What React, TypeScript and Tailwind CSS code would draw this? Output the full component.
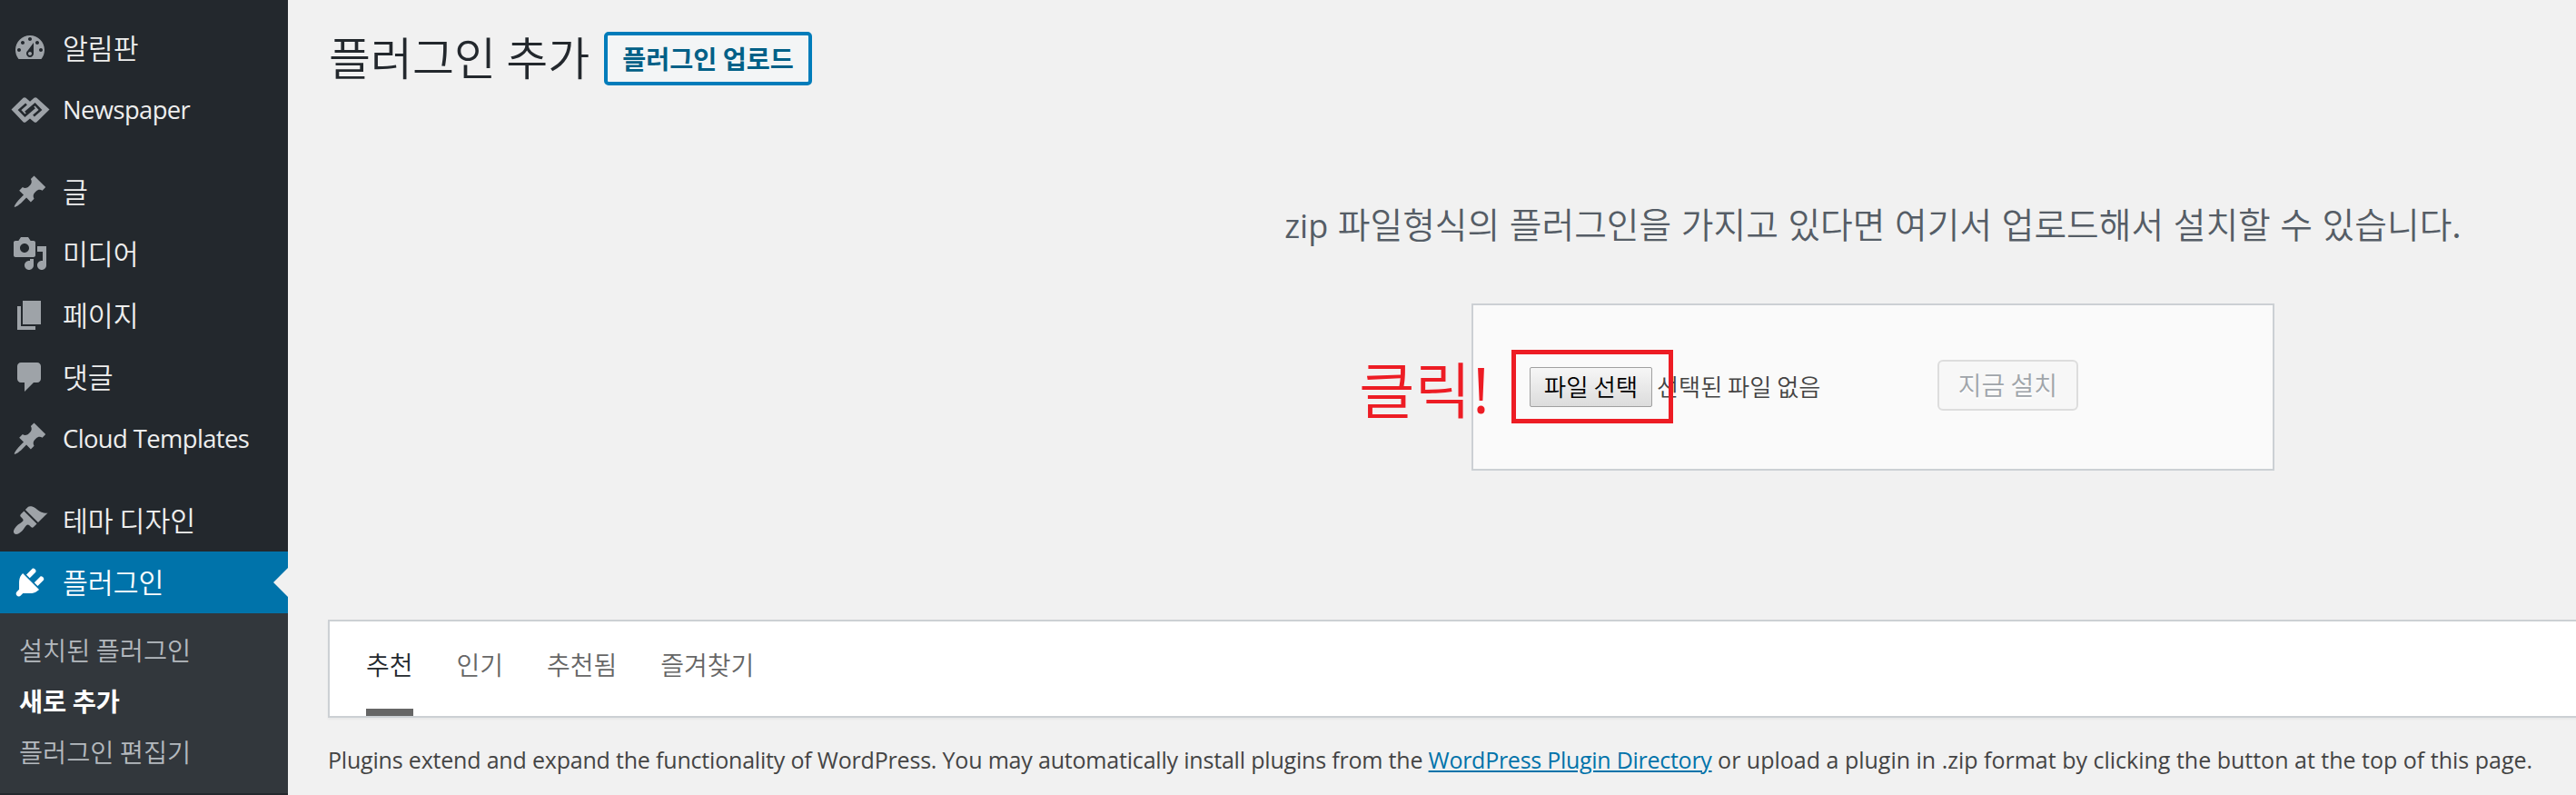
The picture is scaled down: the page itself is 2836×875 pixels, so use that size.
import type { ReactNode } from "react";

const KR = "font-['Noto_Sans_CJK_KR',sans-serif]";
const LATIN = "font-['Open_Sans',sans-serif]";

function Icon({ children }: { children: ReactNode }) {
  return (
    <svg viewBox="0 0 20 20" className="size-10 shrink-0 fill-current" fillRule="evenodd" aria-hidden="true">
      {children}
    </svg>
  );
}

const DashboardIcon = () => (
  <Icon>
    <path d="M3.76 16h12.48c1.1-1.37 1.76-3.11 1.76-5 0-4.42-3.58-8-8-8s-8 3.58-8 8c0 1.89.66 3.63 1.76 5zM10 4c.55 0 1 .45 1 1s-.45 1-1 1-1-.45-1-1 .45-1 1-1zM6 6c.55 0 1 .45 1 1s-.45 1-1 1-1-.45-1-1 .45-1 1-1zM14 6c.55 0 1 .45 1 1s-.45 1-1 1-1-.45-1-1 .45-1 1-1zM8.63 11.55L12 7v6c0 1.1-.9 2-2 2s-2-.9-2-2c0-.57.24-1.08.63-1.45zM4 10c.55 0 1 .45 1 1s-.45 1-1 1-1-.45-1-1 .45-1 1-1zM16 10c.55 0 1 .45 1 1s-.45 1-1 1-1-.45-1-1 .45-1 1-1zM10 12c.55 0 1 .45 1 1s-.45 1-1 1-1-.45-1-1 .45-1 1-1z" />
  </Icon>
);

const PinIcon = () => (
  <Icon>
    <path d="M10.44 3.02l1.82-1.82 6.36 6.35-1.83 1.82c-1.05-.68-2.48-.57-3.41.36l-.75.75c-.92.93-1.04 2.35-.35 3.41l-1.83 1.82-2.41-2.41-2.8 2.79c-.42.42-3.38 2.71-3.8 2.29s1.86-3.39 2.28-3.81l2.79-2.79L4.1 9.36l1.83-1.82c1.05.69 2.48.57 3.4-.36l.75-.75c.93-.92 1.05-2.35.36-3.41z" />
  </Icon>
);

const MediaIcon = () => (
  <Icon>
    <path d="M13 11V4c0-.55-.45-1-1-1h-1.67L9 1H5L3.67 3H2c-.55 0-1 .45-1 1v7c0 .55.45 1 1 1h10c.55 0 1-.45 1-1zM7 4.5c1.38 0 2.5 1.12 2.5 2.5S8.38 9.5 7 9.5 4.5 8.38 4.5 7 5.62 4.5 7 4.5zM14 6h5v10.5c0 1.38-1.12 2.5-2.5 2.5S14 17.88 14 16.5s1.12-2.5 2.5-2.5c.17 0 .34.02.5.05V9h-3V6zm-4 8.05V13h2v3.5c0 1.38-1.12 2.5-2.5 2.5S7 17.88 7 16.5 8.12 14 9.5 14c.17 0 .34.02.5.05z" />
  </Icon>
);

const PageIcon = () => (
  <Icon>
    <path d="M6 15V2h10v13H6zm-1 1h8v2H3V5h2v11z" />
  </Icon>
);

const CommentIcon = () => (
  <Icon>
    <path d="M5 2h9c1.1 0 2 .9 2 2v7c0 1.1-.9 2-2 2h-2l-5 5v-5H5c-1.1 0-2-.9-2-2V4c0-1.1.9-2 2-2z" />
  </Icon>
);

const BrushIcon = () => (
  <Icon>
    <path d="M14.48 11.06L7.41 3.99l1.5-1.5c.5-.56 2.3-.47 3.51.32 1.21.8 1.43 1.28 2.91 2.1 1.18.64 2.45 1.26 4.45.85zm-.71.71L6.7 4.7 4.93 6.47c-.39.39-.39 1.02 0 1.41l1.06 1.06c.39.39.39 1.03 0 1.42-.6.6-1.43 1.11-2.21 1.69-.35.26-.7.53-1.01.84C1.43 14.23.4 16.08 1.4 17.07c.99 1 2.84-.03 4.18-1.36.31-.31.58-.66.85-1.02.57-.78 1.08-1.61 1.69-2.21.39-.39 1.02-.39 1.41 0l1.06 1.06c.39.39 1.02.39 1.41 0z" />
  </Icon>
);

const PlugIcon = () => (
  <Icon>
    <path d="M13.11 4.36L9.87 7.6 8 5.73l3.24-3.24c.35-.34 1.05-.2 1.56.32.52.51.66 1.21.31 1.55zm-8 1.77l.91-1.12 9.01 9.01-1.19.84c-.71.71-2.63 1.16-3.82 1.16H6.14L4.9 17.26c-.59.59-1.54.59-2.12 0-.59-.58-.59-1.53 0-2.12l1.24-1.24v-3.88c0-1.13.4-3.19 1.09-3.89zm7.26 3.97l3.24-3.24c.34-.35 1.04-.21 1.55.31.52.51.66 1.21.31 1.55l-3.24 3.25z" />
  </Icon>
);

const NewspaperIcon = () => (
  <svg viewBox="-23 -20 46 40" className="-mx-[3px] h-10 w-[46px] shrink-0" aria-hidden="true">
    <path
      d="M-20.5-.5L-7.5-13.2Q-6-14.5-4.5-13.2L0-9.2 4.5-13.2Q6-14.5 7.5-13.2L21.5-.5 7.5 13.2Q6 14.5 4.5 13.2L0 9.4-4.5 13.2Q-6 14.5-7.5 13.2Z"
      className="fill-current"
    />
    <path
      d="M-4-6.5L-11.5 0-5.5 6.3 5-2.8M4 6.5L11.5 0 5.5-6.3-5 2.8"
      className="fill-none stroke-[#23282d]"
      strokeWidth="2.6"
    />
  </svg>
);

function MenuItem({ icon, label, latin, current }: { icon: ReactNode; label: string; latin?: boolean; current?: boolean }) {
  return (
    <li className={current ? "flex h-[68px] items-center bg-[#0073aa] pl-[13px] text-white" : "flex h-[68px] items-center pl-[13px] text-[#9ea3a8]"}>
      {icon}
      <span
        className={`${current ? "text-white" : "text-[#eee]"} ${
          latin
            ? "ml-4 font-['Open_Sans',sans-serif] text-[27.4px] font-normal tracking-[-0.6px]"
            : "ml-4 pb-[3px] font-['Noto_Sans_CJK_KR',sans-serif] text-[30.3px] font-[350]"
        } grow leading-10 whitespace-nowrap`}
      >
        {label}
      </span>
      {current && <span className="h-0 w-0 border-y-[16px] border-r-[16px] border-y-transparent border-r-[#f1f1f1]" />}
    </li>
  );
}

function Sidebar() {
  return (
    <nav className="h-[875px] w-[317px] shrink-0 bg-[#23282d] pt-[19px]">
      <ul>
        <MenuItem icon={<DashboardIcon />} label="알림판" />
        <MenuItem icon={<NewspaperIcon />} label="Newspaper" latin />
      </ul>
      <ul className="mt-[22px]">
        <MenuItem icon={<PinIcon />} label="글" />
        <MenuItem icon={<MediaIcon />} label="미디어" />
        <MenuItem icon={<PageIcon />} label="페이지" />
        <MenuItem icon={<CommentIcon />} label="댓글" />
        <MenuItem icon={<PinIcon />} label="Cloud Templates" latin />
      </ul>
      <ul className="mt-[22px]">
        <MenuItem icon={<BrushIcon />} label="테마 디자인" />
        <MenuItem icon={<PlugIcon />} label="플러그인" current />
      </ul>
      <ul className={`${KR} h-[198px] bg-[#32373c] pt-3 pl-[21px] text-[28.4px] leading-[56px] font-[350] text-[#b4b9be]`}>
        <li>설치된 플러그인</li>
        <li className="font-semibold text-white">새로 추가</li>
        <li>플러그인 편집기</li>
      </ul>
    </nav>
  );
}

function UploadForm() {
  return (
    <div className="relative mx-auto mt-[61px] flex h-[184px] w-[884px] items-start border-2 border-[#ccd0d4] bg-[#fafafa] pt-[60px] pl-[62px]">
      <button className={`${KR} mt-2 h-11 w-[135px] rounded-[2px] border border-[#a0a0a0] bg-linear-to-b from-[#f6f6f6] to-[#dcdcdc] pb-0.5 text-[26.5px] leading-10 font-[350] whitespace-nowrap text-black`}>
        파일 선택
      </button>
      <span className={`${KR} mt-2 ml-[5px] w-[309px] text-[26.2px] leading-[42px] font-[350] whitespace-nowrap text-[#444]`}>선택된 파일 없음</span>
      <button className={`${KR} h-14 w-[155px] rounded-md border-2 border-[#ddd] bg-[#f7f7f7] pb-0.5 text-[28px] leading-10 font-[350] whitespace-nowrap text-[#a0a5aa] [text-shadow:0_2px_0_#fff]`}>
        지금 설치
      </button>
      <div className="absolute top-[49px] left-[42px] h-[81px] w-[178px] border-[5px] border-[#ed1c24]" />
      <div className={`${KR} absolute top-[50px] -left-[126px] h-20 text-[67px] leading-[80px] font-[350] whitespace-nowrap text-[#ed1c24]`}>
        클릭<span className={`${LATIN} ml-0.5 text-[70px] leading-none font-normal`}>!</span>
      </div>
    </div>
  );
}

const TABS = ["추천", "인기", "추천됨", "즐겨찾기"];

function FilterBar() {
  return (
    <div className={`${KR} mt-[164px] flex h-[108px] gap-12 border-2 border-[#ccd0d4] bg-white pl-10 text-[28px] leading-10 font-[350] shadow-[0_2px_2px_rgba(0,0,0,0.04)]`}>
      {TABS.map((tab, i) => (
        <a
          key={tab}
          className={`${i === 0 ? "border-[#666] text-[#23282d]" : "border-transparent text-[#666]"} flex h-full items-center border-b-8 pb-[3px] whitespace-nowrap`}
        >
          {tab}
        </a>
      ))}
    </div>
  );
}

export default function App() {
  return (
    <div className="flex h-[875px] w-[2836px] overflow-hidden bg-[#f1f1f1]">
      <Sidebar />
      <main className="w-[2519px] overflow-hidden pt-[35px] pl-11">
        <div className="w-[3402px]">
          <div className="flex h-[59px] items-center">
            <h1 className={`${KR} w-[304px] pb-2 pl-px text-[50px] leading-[60px] font-[350] whitespace-nowrap text-[#23282d]`}>플러그인 추가</h1>
            <a className={`${KR} flex h-[59px] w-[229px] items-center justify-center rounded-[5px] border-4 border-[#007cba] bg-[#f3f5f6] pb-0.5 text-[28.3px] leading-10 font-semibold whitespace-nowrap text-[#016087]`}>
              플러그인 업로드
            </a>
          </div>
          <p className={`${KR} mt-[123px] h-14 text-center text-[38.8px] leading-[56px] font-[350] [word-spacing:1.9px] whitespace-nowrap text-[#555d66]`}>
            <span className={`${LATIN} text-[36px] leading-none font-normal`}>zip</span> 파일형식의 플러그인을 가지고 있다면 여기서 업로드해서 설치할 수 있습니다.
          </p>
          <UploadForm />
          <FilterBar />
          <p className={`${LATIN} mt-[26px] text-[25px] leading-10 whitespace-pre text-[#444]`}>
            <span className="tracking-[-0.19px]">Plugins extend and expand the functionality of WordPress. You may automatically install plugins from the </span>
            <a className="tracking-[-0.27px] text-[#0073aa] underline decoration-2 underline-offset-2">WordPress Plugin Directory</a>
            <span> or upload a plugin in .zip format by clicking the button at the top of this page.</span>
          </p>
        </div>
      </main>
    </div>
  );
}
